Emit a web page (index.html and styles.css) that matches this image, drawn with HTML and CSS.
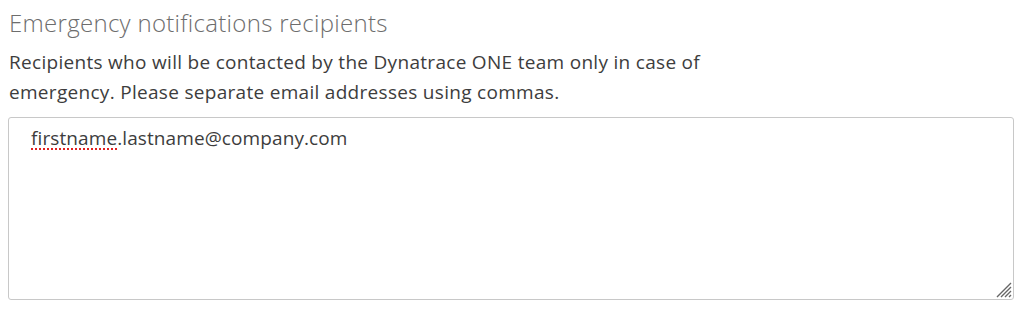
FILE: index.html
```html
<!DOCTYPE html>
<html lang="en">
<head>
    <meta charset="UTF-8">
    <title>Emergency notifications recipients</title>
    <link rel="stylesheet" href="styles.css">
</head>
<body>
    <section class="recipients">
        <h2 class="recipients-title">Emergency notifications recipients</h2>
        <p class="recipients-desc">Recipients who will be contacted by the Dynatrace ONE team only in case of emergency. Please separate email addresses using commas.</p>
        <div class="recipients-box">
            <div class="recipients-value"><span class="misspelled">firstname</span>.lastname@company.com</div>
            <svg class="grip" width="18" height="18" viewBox="0 0 18 18">
                <path d="M17 3 L3 17 M17 7 L7 17 M17 11 L11 17 M17 15 L15 17" stroke="#666" stroke-width="1.4" fill="none"/>
            </svg>
        </div>
    </section>
</body>
</html>
```

FILE: styles.css
```css
body {
    margin: 0;
    padding: 0 10px 0 8px;
    font-family: "Open Sans", "Noto Sans", sans-serif;
    background-color: #fff;
    color: #454646;
}

.recipients-title {
    margin: 0;
    padding: 8px 0 0 1px;
    font-size: 24px;
    font-weight: 300;
    letter-spacing: 0.3px;
    line-height: 30px;
    color: #6d6d6d;
}

.recipients-desc {
    margin: 9px 0 0 1px;
    max-width: 730px;
    font-size: 19px;
    letter-spacing: 0.3px;
    line-height: 30px;
    color: #3d3d3d;
}

.recipients-box {
    position: relative;
    box-sizing: border-box;
    margin-top: 10px;
    height: 183px;
    border: 1px solid #c8c8c8;
    border-radius: 3px;
    padding: 6px 22px;
}

.recipients-value {
    font-size: 19px;
    letter-spacing: 0.1px;
    line-height: 28px;
    color: #3d3d3d;
}

.misspelled {
    text-decoration: underline dotted #e02020;
    text-decoration-thickness: 2px;
    text-underline-offset: 3px;
}

.grip {
    position: absolute;
    right: 1px;
    bottom: 1px;
}
```
